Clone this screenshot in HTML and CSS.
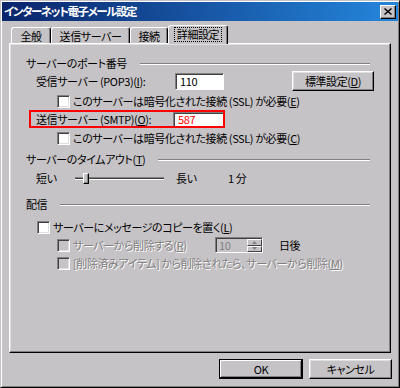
FILE: index.html
```html
<!DOCTYPE html>
<html lang="ja">
<head>
  <meta charset="UTF-8" />
  <title>インターネット電子メール設定</title>
  <link rel="stylesheet" href="styles.css">
</head>
<body>
  <div class="window">
    <div class="titlebar">
      <span class="title">インターネット電子メール設定</span>
      <span class="close">
        <svg width="8" height="7" viewBox="0 0 8 7"><path d="M0.5 0.5L7.5 6.5M7.5 0.5L0.5 6.5" stroke="#000" stroke-width="1.4" fill="none"/></svg>
      </span>
    </div>

    <div class="dialog">
      <div class="tabs">
        <div class="tab t1">全般</div>
        <div class="tab t2">送信サーバー</div>
        <div class="tab t3">接続</div>
        <div class="tab t4 active"><span class="focus">詳細設定</span></div>
      </div>

      <div class="panel">
        <div class="group-head"><span>サーバーのポート番号</span><span class="line"></span></div>

        <div class="row port">
          <span class="port-label">受信サーバー (POP3)(<u>I</u>):</span>
          <span class="field">110</span>
          <span class="btn std-btn">標準設定(<u>D</u>)</span>
        </div>
        <div class="row check sub c1">
          <span class="box"></span><span>このサーバーは暗号化された接続 (SSL) が必要(<u>E</u>)</span>
        </div>
        <div class="row marked">
          <span class="port-label">送信サーバー (SMTP)(<u>O</u>):</span>
          <span class="field red">587</span>
        </div>
        <div class="row check sub c2">
          <span class="box"></span><span>このサーバーは暗号化された接続 (SSL) が必要(<u>C</u>)</span>
        </div>

        <div class="group-head g2"><span>サーバーのタイムアウト(<u>T</u>)</span><span class="line"></span></div>
        <div class="row slider-row">
          <span class="short">短い</span>
          <span class="track">
            <span class="channel first"></span>
            <span class="thumb"></span>
            <span class="channel rest"></span>
          </span>
          <span class="long">長い</span>
          <span class="minutes">1 分</span>
        </div>

        <div class="group-head g3"><span>配信</span><span class="line"></span></div>
        <div class="row check top c3">
          <span class="box"></span><span>サーバーにメッセージのコピーを置く(<u>L</u>)</span>
        </div>
        <div class="row check sub c4 disabled">
          <span class="box"></span><span class="del-label">サーバーから削除する(<u>R</u>)</span>
          <span class="spin">
            <span class="spin-val">10</span>
            <span class="spin-btns">
              <span class="spin-btn"><svg width="5" height="3" viewBox="0 0 5 3"><path d="M2.5 0L5 3H0Z" fill="#808080"/></svg></span>
              <span class="spin-btn"><svg width="5" height="3" viewBox="0 0 5 3"><path d="M0 0H5L2.5 3Z" fill="#808080"/></svg></span>
            </span>
          </span>
          <span class="days">日後</span>
        </div>
        <div class="row check sub c5 disabled">
          <span class="box"></span><span>[削除済みアイテム] から削除されたら、サーバーから削除(<u>M</u>)</span>
        </div>
      </div>

      <div class="buttons">
        <span class="btn ok-btn">OK</span>
        <span class="btn">キャンセル</span>
      </div>
    </div>
  </div>
</body>
</html>
```

FILE: styles.css
```css
* {
  box-sizing: border-box;
}
body {
  margin: 0;
  font-family: "Noto Sans CJK JP", sans-serif;
  font-size: 11px;
  letter-spacing: -0.4px;
  font-feature-settings: "palt";
  line-height: 1;
  color: #000;
  background-color: #c6c3c6;
}
u {
  text-decoration-thickness: 1px;
  text-underline-offset: 1px;
}
.window {
  width: 400px;
  height: 388px;
  padding: 1px;
  border: 1px solid;
  border-color: #c6c3c6 #000 #000 #c6c3c6;
  box-shadow: inset 1px 1px #fff, inset -1px -1px #808080;
  background-color: #c6c3c6;
}
.titlebar {
  height: 19px;
  display: flex;
  align-items: center;
  justify-content: space-between;
  padding: 0 2px 0 2px;
  background: linear-gradient(to right, #0a246a, #2486dc);
  color: white;
  font-weight: bold;
}
.title {
  font-size: 11.5px;
  letter-spacing: -1.4px;
}
.close {
  width: 16px;
  height: 14px;
  display: flex;
  align-items: center;
  justify-content: center;
  background-color: #c6c3c6;
  border: 1px solid;
  border-color: #fff #000 #000 #fff;
  box-shadow: inset -1px -1px #808080;
}
.dialog {
  padding: 4px 7px 0;
}
.tabs {
  display: flex;
  align-items: flex-end;
  height: 18px;
  padding-left: 2px;
}
.tab {
  height: 16px;
  display: flex;
  align-items: center;
  justify-content: center;
  border: 1px solid;
  border-bottom: none;
  border-color: #fff #000 transparent #fff;
  border-radius: 3px 3px 0 0;
  box-shadow: inset -1px 0 #808080;
  padding-top: 1px;
}
.t1 { width: 40px; }
.t2 { width: 79px; }
.t3 { width: 38px; }
.t4 { width: 60px; }
.tab.active {
  height: 19px;
  margin-bottom: -1px;
  position: relative;
  z-index: 1;
  background-color: #c6c3c6;
  padding-top: 0;
  padding-bottom: 1px;
}
.focus {
  outline: 1px dotted #000;
  outline-offset: 1px;
  padding: 0 1px;
}
.panel {
  height: 310px;
  border: 1px solid;
  border-color: #fff #000 #000 #fff;
  box-shadow: inset -1px -1px #808080, inset 1px 1px #dfdfdf;
  padding: 12px 0 0 16px;
}
.group-head {
  display: flex;
  align-items: center;
  height: 14px;
  width: 344px;
}
.group-head .line {
  flex: 1;
  margin-left: 13px;
  margin-top: 2px;
  border-top: 1px solid #808080;
  border-bottom: 1px solid #fff;
}
.g2 {
  height: 22px;
}
.g3 {
  margin-top: 10px;
  height: 16px;
}
.row {
  display: flex;
  align-items: center;
}
.port {
  height: 22px;
  padding-left: 10px;
}
.port-label {
  width: 139px;
}
.field {
  width: 49px;
  height: 17px;
  display: flex;
  align-items: center;
  padding-left: 4px;
  background-color: white;
  border: 1px solid;
  border-color: #808080 #fff #fff #808080;
  box-shadow: inset 1px 1px #404040;
}
.btn {
  width: 83px;
  height: 20px;
  display: flex;
  align-items: center;
  justify-content: center;
  border: 1px solid;
  border-color: #fff #000 #000 #fff;
  box-shadow: inset -1px -1px #808080, inset 1px 1px #dfdfdf;
}
.std-btn {
  width: 82px;
  margin-left: 68px;
}
.check {
  height: 18px;
}
.sub {
  padding-left: 31px;
}
.top {
  padding-left: 11px;
}
.c2 {
  height: 20px;
}
.box {
  width: 13px;
  height: 13px;
  margin-right: 3px;
  flex-shrink: 0;
  background-color: white;
  border: 1px solid;
  border-color: #808080 #fff #fff #808080;
  box-shadow: inset 1px 1px #404040, inset -1px -1px #dfdfdf;
}
.marked {
  height: 18px;
  width: 196px;
  margin-left: 3px;
  padding-left: 5px;
  border: 2px solid #f00;
}
.marked .port-label {
  width: 137px;
}
.marked .field {
  flex: 1;
  height: 14px;
  border-right: none;
  border-bottom: none;
  color: #f00;
}
.slider-row {
  height: 16px;
  padding-left: 10px;
}
.short {
  width: 39px;
}
.track {
  display: flex;
  align-items: center;
  width: 89px;
}
.channel {
  height: 3px;
  border-top: 1px solid #808080;
  border-bottom: 1px solid #fff;
  background-color: #404040;
}
.first {
  width: 8px;
}
.rest {
  flex: 1;
}
.thumb {
  width: 6px;
  height: 11px;
  background-color: #c6c3c6;
  border: 1px solid;
  border-color: #fff #000 #000 #fff;
  box-shadow: inset -1px -1px #808080;
}
.long {
  margin-left: 12px;
  width: 24px;
}
.minutes {
  margin-left: 28px;
}
.c3 {
  margin-top: 6px;
}
.disabled {
  color: #808080;
  text-shadow: 1px 1px 0 #fff;
}
.disabled .box {
  background-color: #c6c3c6;
}
.del-label {
  width: 142px;
}
.spin {
  width: 48px;
  height: 16px;
  display: flex;
  text-shadow: none;
  border: 1px solid;
  border-color: #808080 #fff #fff #808080;
  box-shadow: inset 1px 1px #404040;
}
.spin-val {
  flex: 1;
  padding: 2px 0 0 3px;
}
.spin-btns {
  width: 15px;
  display: flex;
  flex-direction: column;
  padding: 1px 0 0;
}
.spin-btn {
  flex: 1;
  display: flex;
  align-items: center;
  justify-content: center;
  border: 1px solid;
  border-color: #fff #404040 #404040 #fff;
}
.days {
  margin-left: 16px;
  color: #000;
  text-shadow: none;
}
.buttons {
  display: flex;
  justify-content: flex-end;
  gap: 6px;
  margin-top: 6px;
  margin-right: -1px;
}
.ok-btn {
  width: 84px;
  border-color: #000;
  box-shadow: inset -1px -1px #000, inset 1px 1px #fff, inset -2px -2px #808080;
}
```
